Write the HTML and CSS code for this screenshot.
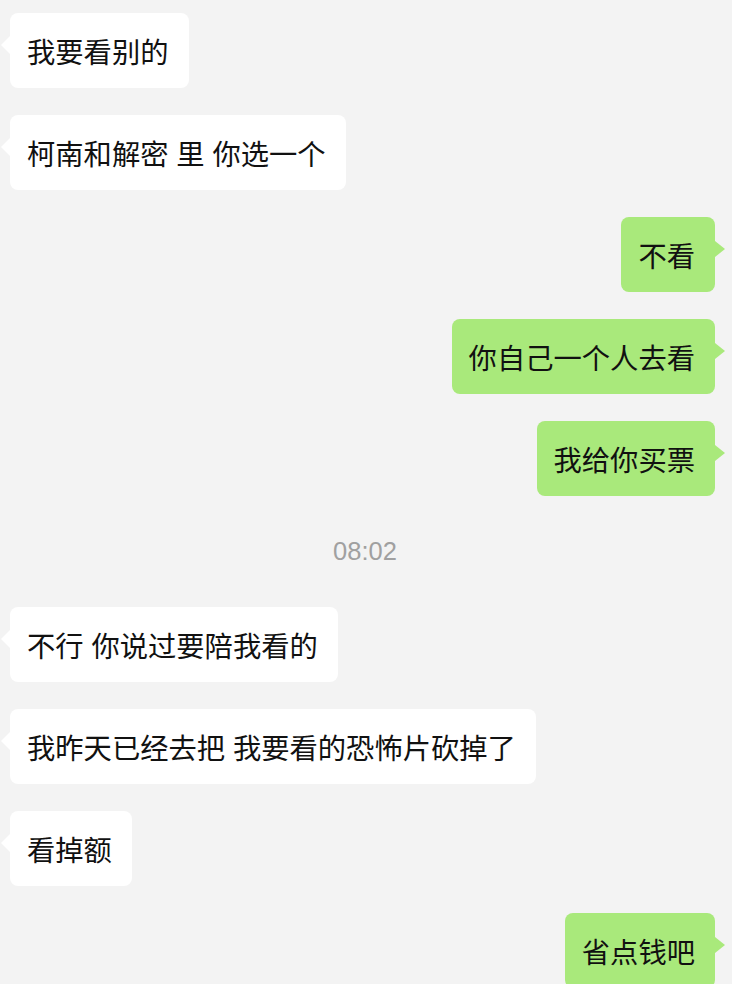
FILE: index.html
```html
<!DOCTYPE html>
<html lang="zh-CN">
<head>
  <meta charset="UTF-8">
  <meta name="viewport" content="width=device-width, initial-scale=1.0">
  <title>聊天记录</title>
  <link rel="stylesheet" href="styles.css">
</head>
<body>

  <div class="chat">
    <div class="row left"><div class="bubble">我要看别的</div></div>
    <div class="row left"><div class="bubble">柯南和解密 里 你选一个</div></div>
    <div class="row right"><div class="bubble">不看</div></div>
    <div class="row right"><div class="bubble">你自己一个人去看</div></div>
    <div class="row right"><div class="bubble">我给你买票</div></div>

    <div class="time">08:02</div>

    <div class="row left"><div class="bubble">不行 你说过要陪我看的</div></div>
    <div class="row left"><div class="bubble">我昨天已经去把 我要看的恐怖片砍掉了</div></div>
    <div class="row left"><div class="bubble">看掉额</div></div>
    <div class="row right"><div class="bubble">省点钱吧</div></div>
  </div>

</body>
</html>
```

FILE: styles.css
```css
/* Chat screen */
body {
  margin: 0;
  background-color: #f3f3f3;
  font-family: "Noto Sans CJK SC", "Noto Sans", sans-serif;
  color: #111;
}
.chat {
  display: flex;
  flex-direction: column;
  gap: 27px;
  padding: 13px 17px 0 10px;
}
.row {
  display: flex;
}
.row.left {
  justify-content: flex-start;
}
.row.right {
  justify-content: flex-end;
}
.bubble {
  position: relative;
  background-color: #fff;
  border-radius: 8px;
  padding: 18px 20px 18px 17px;
  font-size: 28.3px;
  line-height: 39px;
  word-spacing: 1.5px;
  white-space: nowrap;
}
.right .bubble {
  background-color: #a9e97b;
}
/* little tails */
.bubble::before {
  content: "";
  position: absolute;
  top: 23px;
  border-top: 9px solid transparent;
  border-bottom: 9px solid transparent;
}
.left .bubble::before {
  left: -9px;
  border-right: 9px solid #fff;
}
.right .bubble::before {
  right: -10px;
  top: 24px;
  border-top-width: 8px;
  border-bottom-width: 8px;
  border-left: 10px solid #a9e97b;
}
.time {
  height: 57px;
  display: flex;
  align-items: center;
  justify-content: center;
  padding-left: 5px;
  font-family: "Liberation Sans", Arial, sans-serif;
  font-size: 25.5px;
  color: #a0a0a0;
}
```
